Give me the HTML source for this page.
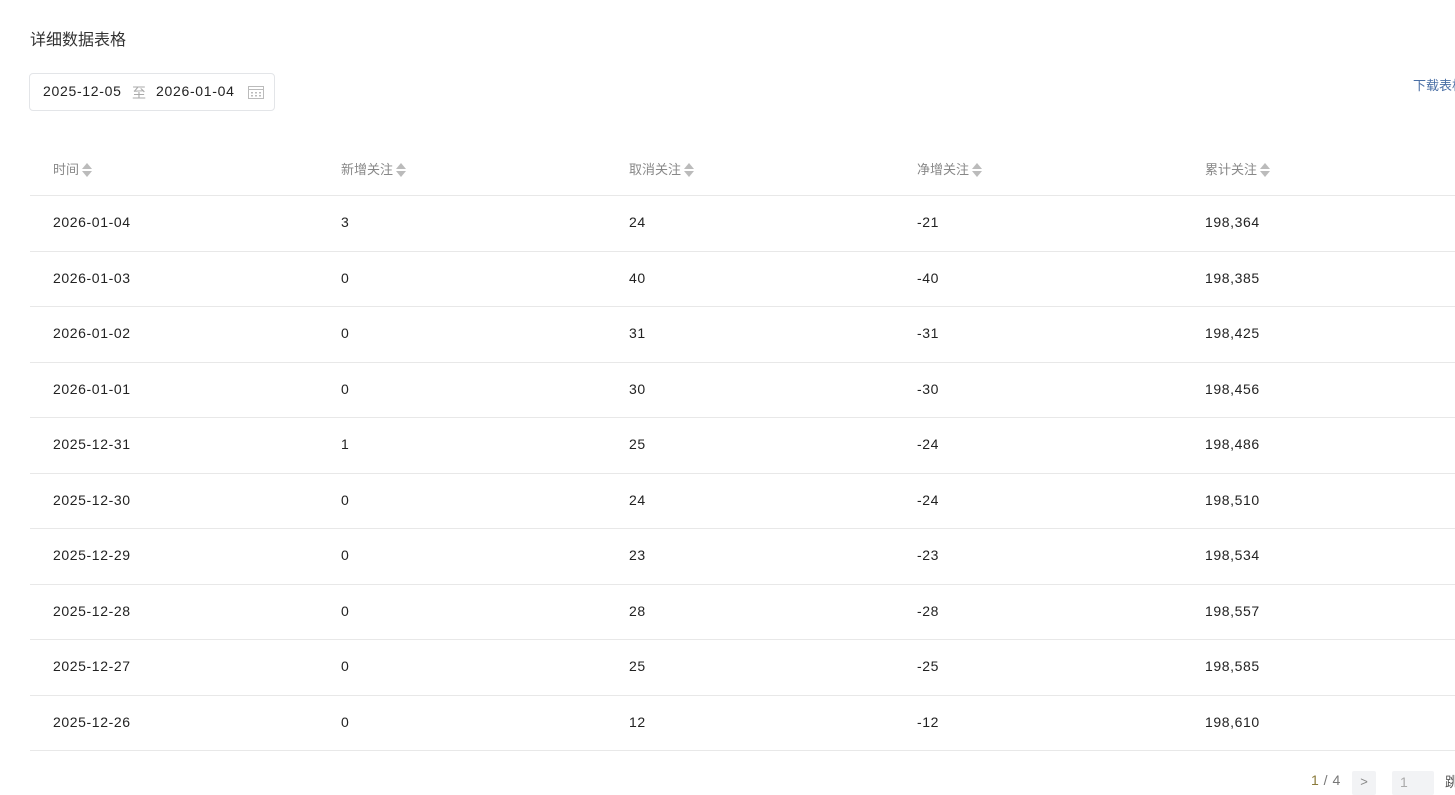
<!DOCTYPE html>
<html><head><meta charset="utf-8"><style>
body{margin:0;width:1455px;height:789px;overflow:hidden;background:#fff;font-family:"Liberation Sans","Noto Sans CJK SC",sans-serif;color:#222;position:relative}
.t{position:absolute;left:30px;top:26px;font-size:16px;color:#333}
.dp{position:absolute;left:29px;top:73px;width:244px;height:36px;border:1px solid #e3e5e8;border-radius:4px;font-size:14px;letter-spacing:0.7px}
.dp span{position:absolute;top:9px}
.dl{position:absolute;top:75px;font-size:13px;color:#4a6fa5;white-space:nowrap}
.hd{position:absolute;top:159px;font-size:13px;color:#888}
.ar{display:inline-block;vertical-align:middle;margin-left:3px;width:10px;height:16px;position:relative;top:-1px}
.ar:before{content:"";position:absolute;left:0;top:1px;border:5px solid transparent;border-bottom:6px solid #bbb;border-top:0}
.ar:after{content:"";position:absolute;left:0;top:9px;border:5px solid transparent;border-top:6px solid #bbb;border-bottom:0}
.ln{position:absolute;left:30px;right:0;height:1px;background:#e8e8e8}
.c{position:absolute;font-size:14px;color:#222;letter-spacing:0.6px}
.pg{position:absolute;top:772px;font-size:14px;color:#777;letter-spacing:0.5px}
</style></head><body>
<div class="t">详细数据表格</div>
<div class="dp"><span style="left:13px">2025-12-05</span><span style="left:102px;color:#aaa">至</span><span style="left:126px">2026-01-04</span>
<svg style="position:absolute;left:218px;top:11px" width="16" height="14" viewBox="0 0 16 14"><rect x="0.5" y="1.5" width="15" height="12" fill="none" stroke="#bbb"/><line x1="0.5" y1="4.5" x2="15.5" y2="4.5" stroke="#bbb"/><g fill="#bbb"><rect x="3" y="7" width="2" height="1.5"/><rect x="7" y="7" width="2" height="1.5"/><rect x="11" y="7" width="2" height="1.5"/><rect x="3" y="10" width="2" height="1.5"/><rect x="7" y="10" width="2" height="1.5"/><rect x="11" y="10" width="2" height="1.5"/></g></svg></div>
<div class="dl" style="left:1413px">下载表格</div>
<div class="hd" style="left:53px">时间<i class="ar"></i></div>
<div class="hd" style="left:341px">新增关注<i class="ar"></i></div>
<div class="hd" style="left:629px">取消关注<i class="ar"></i></div>
<div class="hd" style="left:917px">净增关注<i class="ar"></i></div>
<div class="hd" style="left:1205px">累计关注<i class="ar"></i></div>
<div class="ln" style="top:195px"></div>
<div id="rows"></div>
<script>
var d=[["2026-01-04",3,24,-21,"198,364"],["2026-01-03",0,40,-40,"198,385"],["2026-01-02",0,31,-31,"198,425"],["2026-01-01",0,30,-30,"198,456"],["2025-12-31",1,25,-24,"198,486"],["2025-12-30",0,24,-24,"198,510"],["2025-12-29",0,23,-23,"198,534"],["2025-12-28",0,28,-28,"198,557"],["2025-12-27",0,25,-25,"198,585"],["2025-12-26",0,12,-12,"198,610"]];
var h="",xs=[53,341,629,917,1205];
d.forEach(function(r,i){var y=195+i*55.5;r.forEach(function(v,j){h+='<div class="c" style="left:'+xs[j]+'px;top:'+(y+19)+'px">'+v+'</div>'});h+='<div class="ln" style="top:'+Math.round(y+55.5)+'px"></div>'});
document.getElementById("rows").innerHTML=h;
</script>
<div class="pg" style="left:1311px"><span style="color:#8a7a3a">1</span> / 4</div>
<div style="position:absolute;left:1352px;top:771px;width:24px;height:24px;background:#f2f3f5;border-radius:2px;color:#888;font-size:13px;text-align:center;line-height:22px">&gt;</div>
<div style="position:absolute;left:1392px;top:771px;width:42px;height:24px;background:#f2f3f5;border-radius:2px;color:#aaa;font-size:14px;padding-left:8px;box-sizing:border-box;line-height:22px">1</div>
<div class="pg" style="left:1445px;color:#555">跳</div>
</body></html>
